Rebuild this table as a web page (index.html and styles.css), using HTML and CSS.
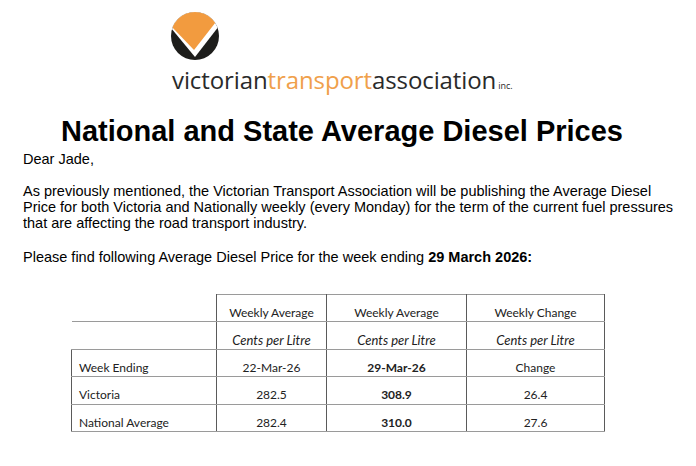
FILE: index.html
```html
<!DOCTYPE html>
<html lang="en">
<head>
<meta charset="utf-8">
<title>National and State Average Diesel Prices</title>
<link rel="stylesheet" href="styles.css">
</head>
<body>
<div class="page">
  <header class="logo">
    <svg class="mark" viewBox="0 0 48 48" width="48" height="48" aria-hidden="true">
      <defs><clipPath id="disc"><circle cx="24" cy="24" r="24"/></clipPath></defs>
      <g clip-path="url(#disc)">
        <rect width="48" height="48" fill="#1d1d1b"/>
        <polygon points="0,0 48,0 48,14 24,45 0,16" fill="#ffffff"/>
        <polygon points="0,0 48,0 48,6 23,38 0,14" fill="#f29b3f"/>
      </g>
    </svg>
    <div class="wordmark">victorian<span class="orange">transport</span>association<span class="inc">inc.</span></div>
  </header>

  <h1 class="title">National and State Average Diesel Prices</h1>

  <div class="letter">
    <p class="greet">Dear Jade,</p>
    <p>As previously mentioned, the Victorian Transport Association will be publishing the Average Diesel Price for both Victoria and Nationally weekly (every Monday) for the term of the current fuel pressures that are affecting the road transport industry.</p>
    <p class="find">Please find following Average Diesel Price for the week ending <b>29 March 2026:</b></p>
  </div>

  <table class="prices">
    <colgroup>
      <col class="c1"><col class="c2"><col class="c3"><col class="c4">
    </colgroup>
    <tr>
      <td class="blank"></td>
      <td>Weekly Average</td>
      <td>Weekly Average</td>
      <td>Weekly Change</td>
    </tr>
    <tr>
      <td class="blank"></td>
      <td class="it">Cents per Litre</td>
      <td class="it">Cents per Litre</td>
      <td class="it">Cents per Litre</td>
    </tr>
    <tr>
      <td class="label">Week Ending</td>
      <td>22-Mar-26</td>
      <td class="b">29-Mar-26</td>
      <td>Change</td>
    </tr>
    <tr>
      <td class="label">Victoria</td>
      <td>282.5</td>
      <td class="b">308.9</td>
      <td>26.4</td>
    </tr>
    <tr>
      <td class="label">National Average</td>
      <td>282.4</td>
      <td class="b">310.0</td>
      <td>27.6</td>
    </tr>
  </table>
</div>
</body>
</html>
```

FILE: styles.css
```css
html, body {
  margin: 0;
  padding: 0;
  background: #ffffff;
}

.page {
  width: 696px;
  font-family: "Liberation Sans", Arial, sans-serif;
  color: #000;
}

.logo {
  display: flex;
  flex-direction: column;
  align-items: flex-start;
  padding: 12px 0 0 171px;
}

.mark {
  display: block;
}

.wordmark {
  margin-top: 8px;
  margin-left: 1px;
  font-family: "Open Sans", sans-serif;
  font-size: 24px;
  line-height: 24px;
  color: #2a2a2a;
  letter-spacing: -0.1px;
  white-space: nowrap;
}

.orange {
  color: #f0a04b;
}

.inc {
  font-size: 9px;
  margin-left: 2px;
  letter-spacing: 0;
}

.title {
  margin: 18px 0 0;
  padding-right: 12px;
  text-align: center;
  font-family: "Liberation Sans", Arial, sans-serif;
  font-weight: 700;
  font-size: 29px;
  line-height: 30px;
  color: #000;
}

.letter {
  width: 658px;
  padding: 0 0 0 23px;
  font-size: 14.5px;
  line-height: 16px;
}

.letter p {
  margin: 16px 0 0;
}

.letter p.greet {
  margin-top: 5px;
}

.letter p.find {
  margin-top: 18px;
}

.prices {
  margin: 29px 0 0 71px;
  border-collapse: collapse;
  table-layout: fixed;
  width: 533px;
  font-family: Lato, sans-serif;
  font-size: 12px;
  color: #222;
}

.c1 { width: 145px; }
.c2 { width: 110px; }
.c3 { width: 140px; }
.c4 { width: 138px; }

.prices td {
  padding: 10px 4px 0.4px;
  line-height: 16px;
  text-align: center;
  white-space: nowrap;
  border-top: 1px solid #9a9a9a;
  border-bottom: 1px solid #9a9a9a;
  border-left: 1px solid #5a5a5a;
  border-right: 1px solid #5a5a5a;
}

.prices td.blank {
  border-top: none;
  border-left: none;
}

.prices td.label {
  text-align: left;
  padding-left: 7px;
}

.prices td.it {
  font-style: italic;
  font-size: 13px;
}

.prices td.b {
  font-weight: 700;
}
```
